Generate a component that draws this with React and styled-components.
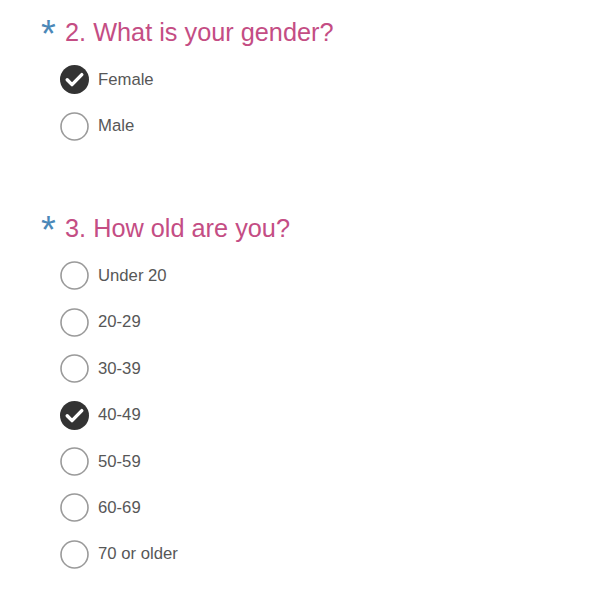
import React from "react";
import styled, { createGlobalStyle } from "styled-components";

const Global = createGlobalStyle`
  html, body { margin: 0; padding: 0; background: #fff; }
  body { font-family: "Liberation Sans", Arial, Helvetica, sans-serif; }
`;

const Page = styled.div`
  width: 600px;
  height: 598px;
  padding-top: 16px;
  box-sizing: border-box;
  background: #fff;
`;

const Question = styled.section`
  margin-bottom: ${(p) => p.$gap || 0}px;
`;

const Heading = styled.h2`
  display: flex;
  align-items: center;
  margin: 0 0 8.8px 0;
  height: 32px;
  font-weight: normal;
  font-size: 25.3px;
  color: #c44d84;
`;

const Asterisk = styled.span`
  display: inline-block;
  width: 24px;
  margin-left: 41px;
  color: #4b88b8;
  font-size: 38px;
  line-height: 32px;
  position: relative;
  top: 2px;
`;

const Title = styled.span`
  line-height: 32px;
`;

const Options = styled.ul`
  list-style: none;
  margin: 0;
  padding: 0 0 0 60px;
`;

const Row = styled.li`
  display: flex;
  align-items: center;
  height: 46.4px;
`;

const Label = styled.span`
  margin-left: 9px;
  font-size: 16.7px;
  color: #575757;
`;

const Radio = ({ checked }) => (
  <svg width="29" height="29" viewBox="0 0 29 29">
    {checked ? (
      <>
        <circle cx="14.5" cy="14.5" r="14.5" fill="#333" />
        <path
          d="M7.2 14.8 L12 19.6 L21.8 9.6"
          fill="none"
          stroke="#fff"
          strokeWidth="3.4"
          strokeLinecap="round"
          strokeLinejoin="round"
        />
      </>
    ) : (
      <circle cx="14.5" cy="14.5" r="13.5" fill="#fff" stroke="#9a9a9a" strokeWidth="1.6" />
    )}
  </svg>
);

const questions = [
  {
    title: "2. What is your gender?",
    options: ["Female", "Male"],
    selected: "Female",
    gap: 62.4,
  },
  {
    title: "3. How old are you?",
    options: ["Under 20", "20-29", "30-39", "40-49", "50-59", "60-69", "70 or older"],
    selected: "40-49",
    gap: 0,
  },
];

export default function App() {
  return (
    <>
      <Global />
      <Page>
        {questions.map((q) => (
          <Question key={q.title} $gap={q.gap}>
            <Heading>
              <Asterisk>*</Asterisk>
              <Title>{q.title}</Title>
            </Heading>
            <Options>
              {q.options.map((o) => (
                <Row key={o}>
                  <Radio checked={o === q.selected} />
                  <Label>{o}</Label>
                </Row>
              ))}
            </Options>
          </Question>
        ))}
      </Page>
    </>
  );
}
